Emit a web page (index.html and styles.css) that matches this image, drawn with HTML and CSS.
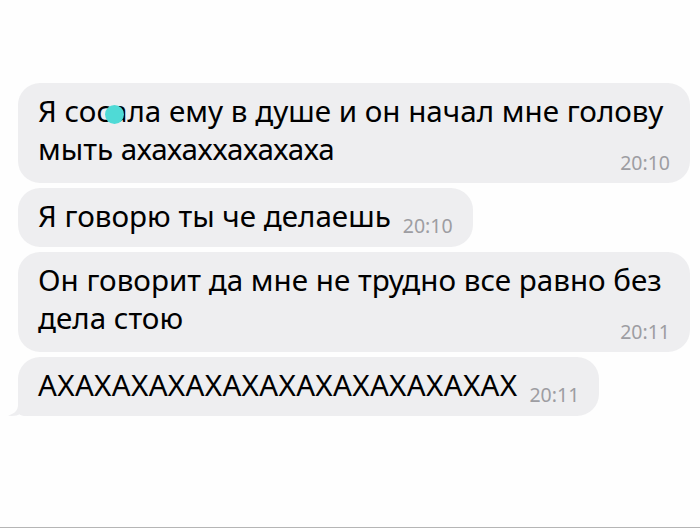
FILE: index.html
```html
<!DOCTYPE html>
<html lang="ru">
<head>
<meta charset="utf-8">
<link rel="stylesheet" href="styles.css">
</head>
<body>
<div class="page">
  <div class="chat">
    <div class="bubble multi">
      <div class="text">Я со<span class="masked">с</span>ала ему в душе и он начал мне голову мыть ахахаххахахаха</div>
      <div class="time">20:10</div>
    </div>
    <div class="bubble">
      <span class="text">Я говорю ты че делаешь</span><span class="time">20:10</span>
    </div>
    <div class="bubble multi">
      <div class="text">Он говорит да мне не трудно все равно без дела стою</div>
      <div class="time">20:11</div>
    </div>
    <div class="bubble tailed">
      <span class="text caps">АХАХАХАХАХАХАХАХАХАХАХАХАХ</span><span class="time">20:11</span>
      <svg class="tail" width="26" height="20" viewBox="0 0 26 20"><path d="M12 0 V9 C12 14 9 17.5 2 19.6 C6 20.4 11 20 15.5 17.5 C17 19 19 20 22 20 H26 V0 Z" fill="#eeeef0"/></svg>
    </div>
  </div>
</div>
</body>
</html>
```
FILE: styles.css
```css
* { box-sizing: border-box; }
html, body { margin: 0; padding: 0; background: #fefefe; }
body {
  font-family: "Noto Sans", "Open Sans", sans-serif;
  color: #000;
}
.page {
  width: 700px;
  height: 528px;
  border-bottom: 1px solid #b5b5b5;
  overflow: hidden;
}
.chat {
  display: flex;
  flex-direction: column;
  align-items: flex-start;
  gap: 5px;
  padding: 83px 10px 0 18px;
}
.bubble {
  position: relative;
  background: #eeeef0;
  border-radius: 22px;
  padding: 9px 20px 12px 20px;
  max-width: 672px;
  font-size: 29.6px;
  line-height: 38px;
}
.bubble.multi {
  width: 672px;
  padding: 9px 14px 10px 20px;
}
.bubble.multi .time {
  display: block;
  text-align: right;
  line-height: 20px;
  margin: -15px 6px 0 0;
}
.caps { letter-spacing: 0.3px; }
.time {
  font-size: 19.5px;
  line-height: 16px;
  color: #9d9da2;
  display: inline-block;
  margin-left: 12px;
  vertical-align: -6px;
}
.tailed { border-bottom-left-radius: 6px; }
.tail {
  position: absolute;
  left: -12px;
  bottom: 0;
  display: block;
}
.masked { position: relative; }
.masked::after {
  content: "";
  position: absolute;
  width: 19px;
  height: 19px;
  border-radius: 50%;
  background: #4fdad6;
  left: 9px;
  top: 15px;
}
```
